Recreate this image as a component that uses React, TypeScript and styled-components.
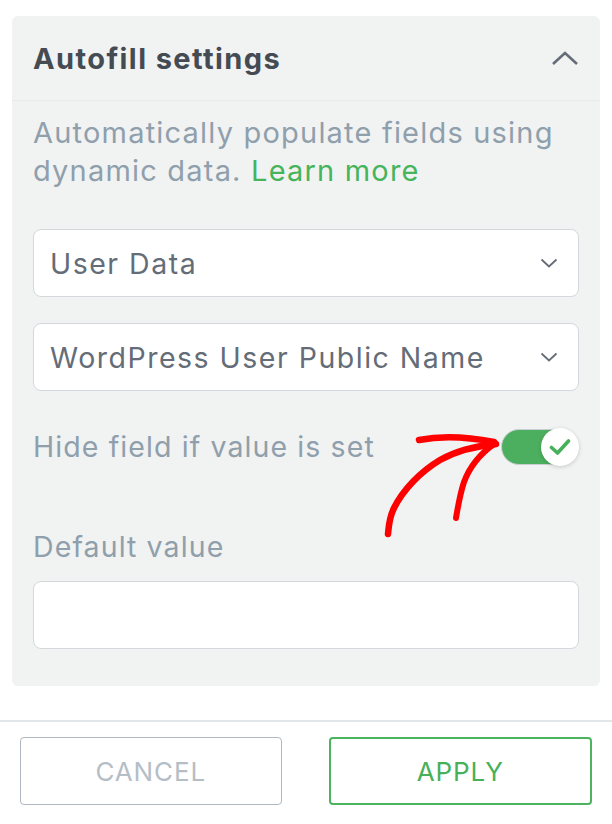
import styled, { createGlobalStyle } from 'styled-components';

const GlobalStyle = createGlobalStyle`
  html, body {
    margin: 0;
    padding: 0;
    background: #ffffff;
  }
  body {
    font-family: Inter, "Open Sans", "Liberation Sans", sans-serif;
    -webkit-font-smoothing: antialiased;
  }
`;

const Page = styled.div`
  position: relative;
  width: 612px;
  padding-top: 16px;
`;

const Panel = styled.section`
  margin: 0 12px;
  background: #f1f2f2;
  border-radius: 6px;
`;

const PanelHeader = styled.header`
  display: flex;
  align-items: center;
  justify-content: space-between;
  height: 84px;
  padding: 0 21px;
  border-bottom: 1px solid #e9ebeb;
`;

const Title = styled.h2`
  margin: 0;
  font-size: 29px;
  font-weight: 700;
  color: #454b53;
  letter-spacing: 1.4px;
`;

const PanelBody = styled.div`
  display: flex;
  flex-direction: column;
  padding: 13px 21px 37px;
`;

const Description = styled.p`
  margin: 0;
  font-size: 29px;
  line-height: 38px;
  letter-spacing: 1.2px;
  color: #8f9fac;
`;

const LearnMore = styled.a`
  color: #46b45a;
  text-decoration: none;
`;

const Select = styled.div<{ $gap: number }>`
  display: flex;
  align-items: center;
  justify-content: space-between;
  box-sizing: border-box;
  height: 68px;
  margin-top: ${(p) => p.$gap}px;
  padding: 0 20px 0 16px;
  background: #ffffff;
  border: 1.5px solid #d3d8dc;
  border-radius: 8px;
  font-size: 28.5px;
  letter-spacing: 1.5px;
  color: #646d77;
`;

const ToggleRow = styled.div`
  display: flex;
  align-items: center;
  justify-content: space-between;
  height: 38px;
  margin-top: 37px;
  padding-right: 2px;
`;

const Label = styled.span<{ $gap?: number }>`
  display: block;
  margin-top: ${(p) => p.$gap ?? 0}px;
  font-size: 28.5px;
  line-height: 38px;
  letter-spacing: 1.1px;
  color: #8f9fac;
`;

const Track = styled.div<{ $on: boolean }>`
  position: relative;
  box-sizing: border-box;
  width: 76px;
  height: 36px;
  border-radius: 18px;
  background: ${(p) => (p.$on ? '#4caf5f' : '#ccd3d8')};
  border: 1px solid #c8ced2;
`;

const Knob = styled.span`
  position: absolute;
  top: -2px;
  right: -3px;
  width: 38px;
  height: 38px;
  border-radius: 50%;
  background: #ffffff;
  box-shadow: 0 1px 4px rgba(0, 0, 0, 0.18);
  display: flex;
  align-items: center;
  justify-content: center;
`;

const TextInput = styled.div`
  box-sizing: border-box;
  height: 68px;
  margin-top: 15px;
  background: #ffffff;
  border: 1.5px solid #d3d8dc;
  border-radius: 8px;
`;

const Divider = styled.hr`
  margin: 34px 0 0;
  border: 0;
  height: 2px;
  background: #e0e6e9;
`;

const Footer = styled.footer`
  display: flex;
  gap: 47px;
  padding: 15px 20px 20px;
`;

const Button = styled.button<{ $primary?: boolean }>`
  flex: 1;
  height: 68px;
  background: #ffffff;
  border-radius: 4px;
  border: ${(p) => (p.$primary ? '2px solid #4cb45f' : '1.5px solid #afb8c0')};
  color: ${(p) => (p.$primary ? '#46b05a' : '#b5bec6')};
  font-family: inherit;
  font-size: 26px;
  font-weight: 400;
  letter-spacing: 0.9px;
  text-transform: uppercase;
`;

const Annotation = styled.svg`
  position: absolute;
  left: 376px;
  top: 426px;
  pointer-events: none;
`;

const ChevronUp = () => (
  <svg width="28" height="16" viewBox="0 0 28 16" fill="none">
    <path d="M2 14 L14 3 L26 14" stroke="#646d77" strokeWidth="2.6" />
  </svg>
);

const ChevronDown = () => (
  <svg width="18" height="10" viewBox="0 0 18 10" fill="none">
    <path d="M1.5 1.5 L9 8.5 L16.5 1.5" stroke="#646d77" strokeWidth="1.8" />
  </svg>
);

const Check = () => (
  <svg width="22" height="18" viewBox="0 0 22 18" fill="none">
    <path d="M2.5 9.5 L8.5 15 L19.5 3" stroke="#46b05a" strokeWidth="3.6" strokeLinecap="round" strokeLinejoin="round" />
  </svg>
);

export default function App() {
  return (
    <>
      <GlobalStyle />
      <Page>
        <Panel>
          <PanelHeader>
            <Title>Autofill settings</Title>
            <ChevronUp />
          </PanelHeader>
          <PanelBody>
            <Description>
              Automatically populate fields using dynamic data. <LearnMore href="#">Learn more</LearnMore>
            </Description>
            <Select $gap={39}>
              <span>User Data</span>
              <ChevronDown />
            </Select>
            <Select $gap={26}>
              <span>WordPress User Public Name</span>
              <ChevronDown />
            </Select>
            <ToggleRow>
              <Label>Hide field if value is set</Label>
              <Track $on>
                <Knob>
                  <Check />
                </Knob>
              </Track>
            </ToggleRow>
            <Label $gap={62}>Default value</Label>
            <TextInput />
          </PanelBody>
        </Panel>
        <Divider />
        <Footer>
          <Button>Cancel</Button>
          <Button $primary>Apply</Button>
        </Footer>
        <Annotation width="130" height="115" viewBox="0 0 130 115" fill="none">
          <path
            d="M12 108 C13 99 13 92 18 82 C27 64 44 46 64 34 C80 25 100 20 120 18"
            stroke="#ff0000"
            strokeWidth="6.5"
            strokeLinecap="round"
            strokeLinejoin="round"
          />
          <path
            d="M43 14 C64 10 92 11 118 16"
            stroke="#ff0000"
            strokeWidth="6.5"
            strokeLinecap="round"
          />
          <path
            d="M118 18 C104 28 94 40 88 56 C84 68 82 80 80 92"
            stroke="#ff0000"
            strokeWidth="6"
            strokeLinecap="round"
          />
        </Annotation>
      </Page>
    </>
  );
}
